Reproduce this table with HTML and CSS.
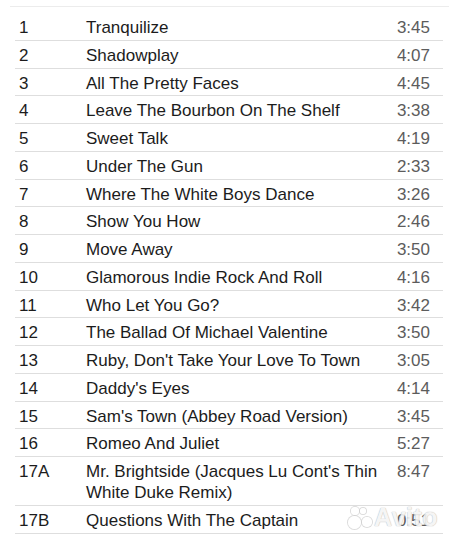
FILE: index.html
```html
<!DOCTYPE html>
<html lang="en">
<head>
    <meta charset="UTF-8">
    <meta name="viewport" content="width=device-width, initial-scale=1.0">
    <title>Sam's Town - Tracklist</title>
    <link rel="stylesheet" href="styles.css">
</head>
<body>
    <div class="tracklist">
        <table class="tracks">
            <colgroup>
                <col class="col-num">
                <col class="col-title">
                <col class="col-time">
            </colgroup>
            <tbody>
                <tr><td class="num">1</td><td class="title">Tranquilize</td><td class="time">3:45</td></tr>
                <tr><td class="num">2</td><td class="title">Shadowplay</td><td class="time">4:07</td></tr>
                <tr><td class="num">3</td><td class="title">All The Pretty Faces</td><td class="time">4:45</td></tr>
                <tr><td class="num">4</td><td class="title">Leave The Bourbon On The Shelf</td><td class="time">3:38</td></tr>
                <tr><td class="num">5</td><td class="title">Sweet Talk</td><td class="time">4:19</td></tr>
                <tr><td class="num">6</td><td class="title">Under The Gun</td><td class="time">2:33</td></tr>
                <tr><td class="num">7</td><td class="title">Where The White Boys Dance</td><td class="time">3:26</td></tr>
                <tr><td class="num">8</td><td class="title">Show You How</td><td class="time">2:46</td></tr>
                <tr><td class="num">9</td><td class="title">Move Away</td><td class="time">3:50</td></tr>
                <tr><td class="num">10</td><td class="title">Glamorous Indie Rock And Roll</td><td class="time">4:16</td></tr>
                <tr><td class="num">11</td><td class="title">Who Let You Go?</td><td class="time">3:42</td></tr>
                <tr><td class="num">12</td><td class="title">The Ballad Of Michael Valentine</td><td class="time">3:50</td></tr>
                <tr><td class="num">13</td><td class="title">Ruby, Don't Take Your Love To Town</td><td class="time">3:05</td></tr>
                <tr><td class="num">14</td><td class="title">Daddy's Eyes</td><td class="time">4:14</td></tr>
                <tr><td class="num">15</td><td class="title">Sam's Town (Abbey Road Version)</td><td class="time">3:45</td></tr>
                <tr><td class="num">16</td><td class="title">Romeo And Juliet</td><td class="time">5:27</td></tr>
                <tr><td class="num">17A</td><td class="title">Mr. Brightside (Jacques Lu Cont's Thin White Duke Remix)</td><td class="time">8:47</td></tr>
                <tr><td class="num">17B</td><td class="title">Questions With The Captain</td><td class="time">0:51</td></tr>
            </tbody>
        </table>
    </div>

    <!-- watermark -->
    <div class="watermark">
        <span class="dots">
            <span class="dot d1"></span>
            <span class="dot d2"></span>
            <span class="dot d3"></span>
            <span class="dot d4"></span>
        </span>
        <span class="wm-text">Avito</span>
    </div>
</body>
</html>
```

FILE: styles.css
```css
* {
    margin: 0;
    padding: 0;
    box-sizing: border-box;
}

body {
    font-family: 'Liberation Sans', Arial, Helvetica, sans-serif;
    background: #fff;
    color: #1c1c1c;
    width: 455px;
    height: 540px;
    overflow: hidden;
    position: relative;
}

.tracklist {
    margin: 6px 6px 0 10px;
    border-top: 1px solid #ececec;
    padding: 6px 6px 0 5px;
}

.tracks {
    width: 100%;
    border-collapse: collapse;
    table-layout: fixed;
    font-size: 17px;
    line-height: 21px;
}

.col-num {
    width: 71px;
}

.col-time {
    width: 57px;
}

.tracks td {
    vertical-align: top;
    padding-top: 4px;
    padding-bottom: 1.78px;
    border-bottom: 1px solid #dedede;
}

.tracks .num {
    padding-left: 4px;
}

.tracks .title {
    padding-right: 4px;
}

.tracks .time {
    text-align: right;
    padding-right: 13px;
    color: #5c5c5c;
}

.watermark {
    position: absolute;
    left: 348px;
    top: 503px;
    display: flex;
    align-items: center;
    gap: 2px;
    opacity: 0.9;
}

.dots {
    position: relative;
    width: 24px;
    height: 26px;
}

.dot {
    position: absolute;
    border-radius: 50%;
    background: rgba(255, 255, 255, 0.85);
    box-shadow: 0 0 0 1px rgba(200, 200, 200, 0.7);
}

.d1 { left: 3px; top: 2px; width: 8px; height: 8px; }
.d2 { left: 12px; top: 3px; width: 6px; height: 6px; }
.d3 { left: 0; top: 11px; width: 13px; height: 13px; }
.d4 { left: 14px; top: 12px; width: 10px; height: 10px; }

.wm-text {
    font-family: 'Liberation Sans', Arial, sans-serif;
    font-size: 25px;
    font-weight: bold;
    color: rgba(255, 255, 255, 0.85);
    text-shadow: 0 0 1px #bcbcbc, 0 0 1px #bcbcbc;
    letter-spacing: 0.5px;
}
```
